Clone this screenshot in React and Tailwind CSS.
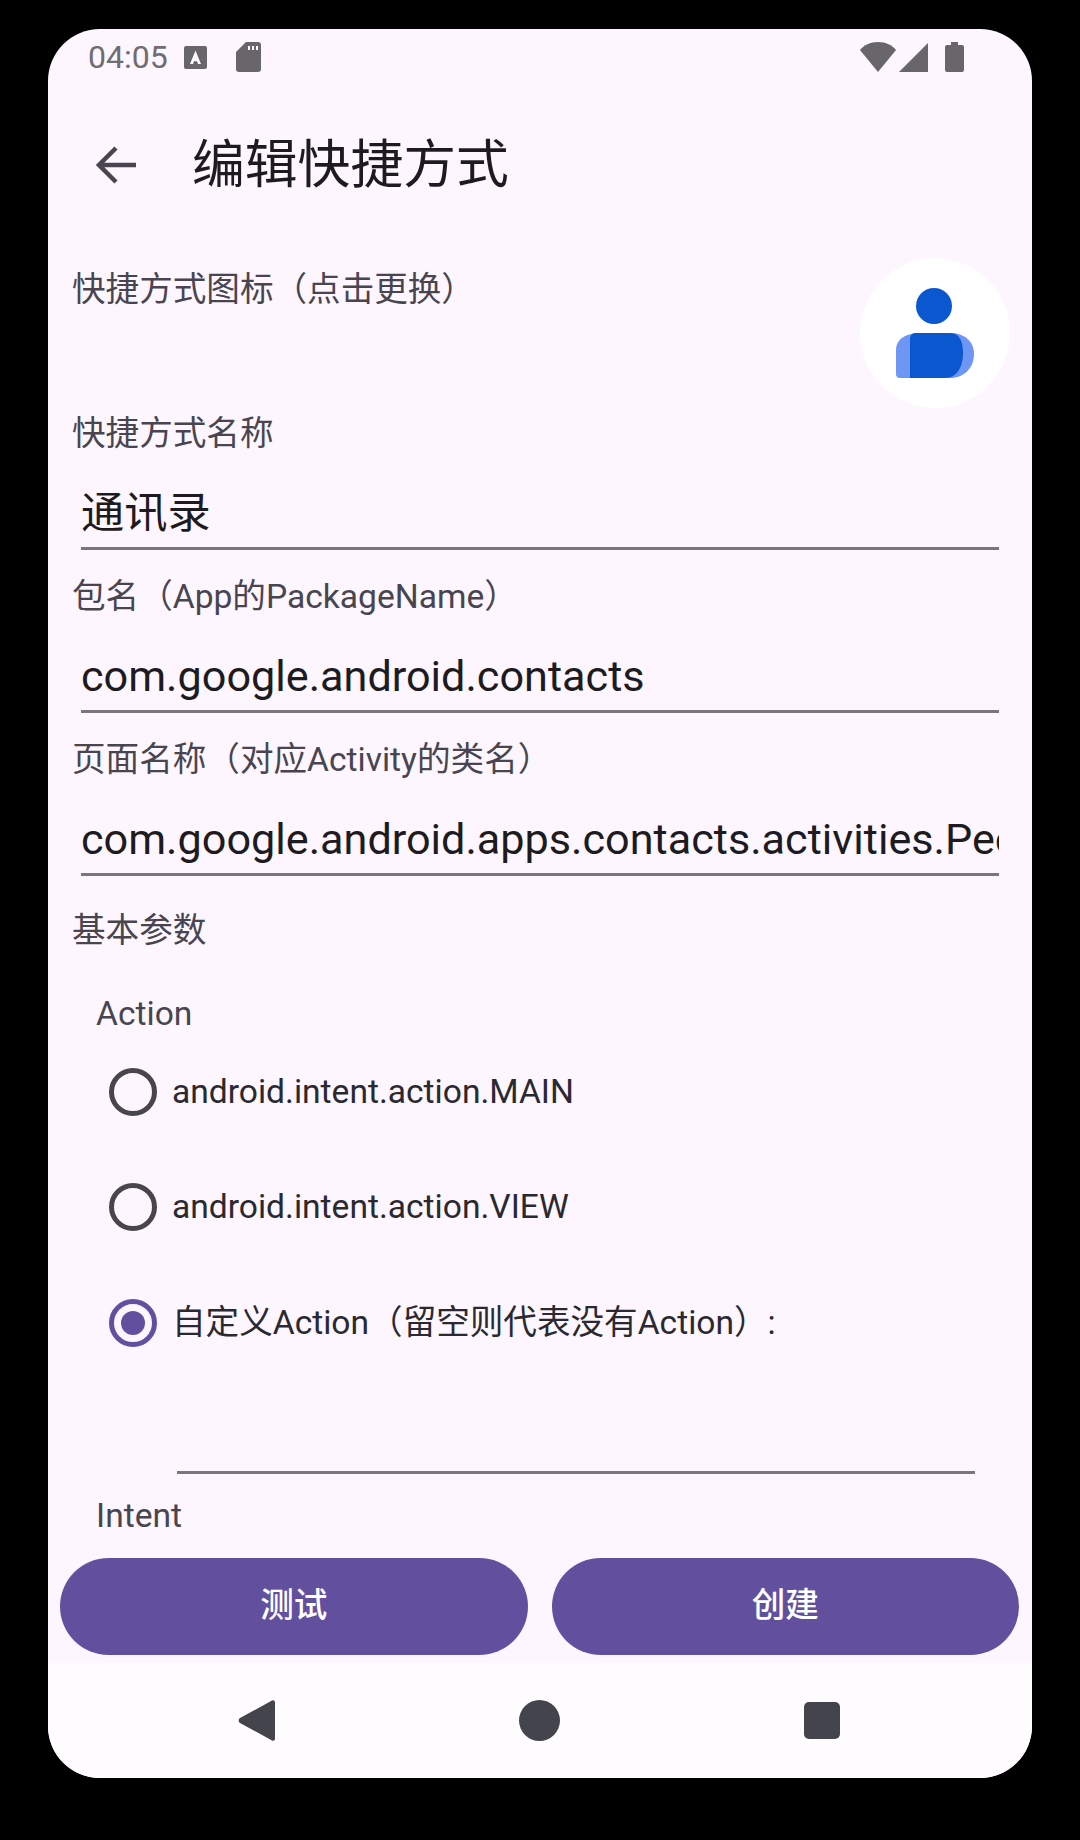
import React from 'react';

const font = 'font-["Roboto","Noto_Sans_CJK_SC",sans-serif]';

const StatusBar = () => (
  <div className="flex h-[56px] shrink-0 items-center justify-between pl-[40px] pr-[68px]">
    <div className="flex items-center">
      <span className="text-[32px] leading-none text-[#6f6c72]">04:05</span>
      <svg className="ml-[16px]" width="23" height="23" viewBox="0 0 23 23">
        <rect width="23" height="23" rx="2" fill="#68656b" />
        <path d="M11.5 4.5 17 18h-3l-1-2.8H10L9 18H6z" fill="#fdf7ff" />
      </svg>
      <svg className="ml-[29px]" width="25" height="30" viewBox="0 0 25 30">
        <path d="M10 0h12a3 3 0 0 1 3 3v24a3 3 0 0 1-3 3H3a3 3 0 0 1-3-3V10z" fill="#68656b" />
        <path d="M12 4h2v4h-2zM16 4h2v4h-2zM20 4h2v4h-2z" fill="#fdf7ff" />
      </svg>
    </div>
    <div className="flex items-center">
      <svg width="36" height="30" viewBox="0 0 36 30">
        <path d="M18 30 0 8C4 3 10 0 18 0s14 3 18 8z" fill="#68656b" />
      </svg>
      <svg className="ml-[3px]" width="29" height="29" viewBox="0 0 29 29">
        <path d="M29 0v29H0z" fill="#68656b" />
      </svg>
      <svg className="ml-[17px]" width="19" height="30" viewBox="0 0 19 30">
        <path d="M6 0h7v3h4a2 2 0 0 1 2 2v23a2 2 0 0 1-2 2H2a2 2 0 0 1-2-2V5a2 2 0 0 1 2-2h4z" fill="#68656b" />
      </svg>
    </div>
  </div>
);

const Header = () => (
  <div className="flex h-[160px] shrink-0 items-center pl-[48px]">
    <svg width="40" height="38" viewBox="0 0 40 38" fill="none" stroke="#49454f" strokeWidth="4.5">
      <path d="M40 19H3M20 2 3 19l17 17" />
    </svg>
    <h1 className="ml-[56px] text-[52.8px] font-normal leading-none text-[#1d1b20]">编辑快捷方式</h1>
  </div>
);

const AppIcon = () => (
  <div className="flex h-[150px] w-[150px] items-center justify-center rounded-full bg-white">
    <svg width="78" height="90" viewBox="0 0 78 90">
      <circle cx="38" cy="18" r="18" fill="#0b57d0" />
      <path d="M0 76V62C0 50 12 45 24 45h30c14 0 24 8 24 21 0 14-10 24-24 24H4a4 4 0 0 1-4-4z" fill="#6e96f4" transform="translate(0 0)" />
      <path d="M14 50a6 6 0 0 1 6-5h34c10 0 13 9 13 20 0 14-6 25-18 25H14z" fill="#0b57d0" />
    </svg>
  </div>
);

const Label = ({ children, className = '' }) => (
  <div className={`h-[40px] text-[33.6px] leading-[40px] text-[#49454f] ${className}`}>{children}</div>
);

const Field = ({ label, value, big }) => (
  <div className="mb-[27px]">
    <Label>{label}</Label>
    <div className={`ml-[9px] mr-[9px] flex h-[96px] items-center overflow-hidden whitespace-nowrap border-b-[3px] border-[#79767d] pt-[27px] text-[#1d1b20] ${big ? 'text-[43.2px]' : 'text-[43.2px]'}`}>
      {value}
    </div>
  </div>
);

const Radio = ({ label, checked }) => (
  <div className="flex h-[115.5px] items-center pl-[37px]">
    <div className={`flex h-[48px] w-[48px] items-center justify-center rounded-full border-[5px] ${checked ? 'border-[#62509f]' : 'border-[#49454f]'}`}>
      {checked && <div className="h-[24px] w-[24px] rounded-full bg-[#62509f]" />}
    </div>
    <span className="ml-[15px] text-[33.6px] leading-none text-[#2b2930]">{label}</span>
  </div>
);

const NavBar = () => (
  <div className="flex h-[115px] shrink-0 items-center bg-[#fffcff] pb-[1px]">
    <svg className="ml-[190px]" width="37" height="41" viewBox="0 0 37 41">
      <path d="M34 .6a2 2 0 0 1 3 1.7v36.4a2 2 0 0 1-3 1.7L2 23a3 3 0 0 1 0-5z" fill="#44444c" />
    </svg>
    <div className="ml-[244px] h-[41px] w-[41px] rounded-full bg-[#44444c]" />
    <div className="ml-[244px] h-[37px] w-[36px] rounded-[5px] bg-[#44444c]" />
  </div>
);

export default function App() {
  return (
    <div className={`h-[1840px] w-[1080px] overflow-hidden bg-black pl-[48px] pt-[29px] ${font}`}>
      <div className="flex h-[1749px] w-[984px] flex-col overflow-hidden rounded-[52px] bg-[#fdf6ff]">
        <StatusBar />
        <Header />

        <div className="h-[1308px] shrink-0 overflow-hidden pl-[24px] pr-[24px]">
          <div className="flex h-[169px] items-start justify-between pt-[13px]">
            <Label className="pt-[12px]">快捷方式图标（点击更换）</Label>
            <div className="mr-[-2px]"><AppIcon /></div>
          </div>
          <Field label="快捷方式名称" value="通讯录" />
          <Field label="包名（App的PackageName）" value="com.google.android.contacts" />
          <Field label="页面名称（对应Activity的类名）" value="com.google.android.apps.contacts.activities.PeopleActivity" />
          <Label className="mt-[35px]">基本参数</Label>
          <Label className="ml-[24px] mt-[43px]">Action</Label>
          <Radio label="android.intent.action.MAIN" />
          <Radio label="android.intent.action.VIEW" />
          <Radio label="自定义Action（留空则代表没有Action）:" checked />
          <div className="ml-[105px] mr-[33px] mt-[90px] border-b-[3px] border-[#79767d]" />
          <Label className="ml-[24px] mt-[22px]">Intent</Label>
        </div>

        <div className="flex h-[110px] shrink-0 gap-[24px] bg-[#fdf6ff] pl-[12px] pr-[13px] pt-[5px]">
          <button type="button" className="h-[97px] flex-1 rounded-full bg-[#62509f] text-[33.6px] font-medium text-white">测试</button>
          <button type="button" className="h-[97px] flex-1 rounded-full bg-[#62509f] text-[33.6px] font-medium text-white">创建</button>
        </div>
        <NavBar />
      </div>
    </div>
  );
}
